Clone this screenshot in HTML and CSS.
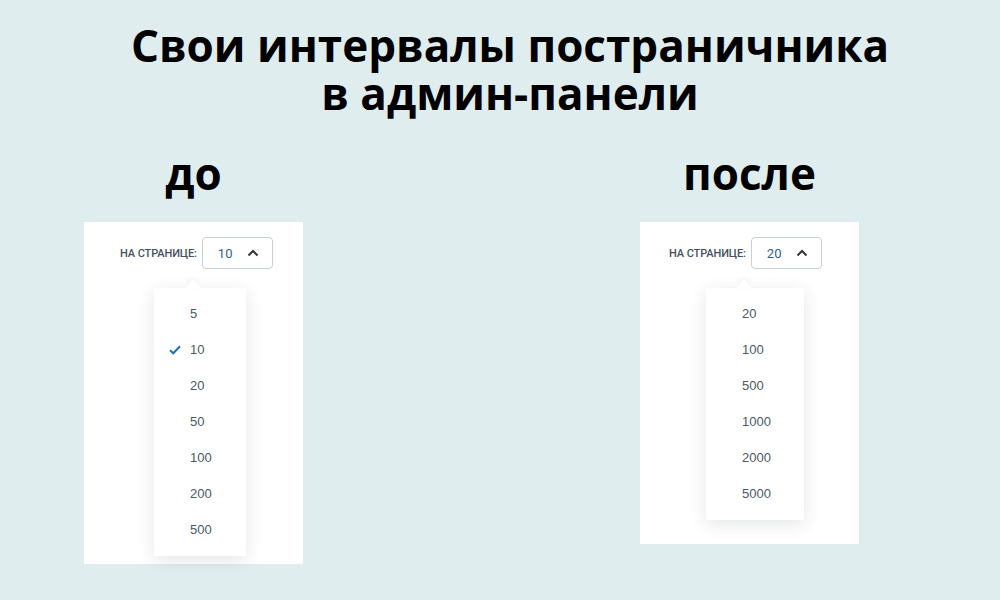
FILE: index.html
```html
<!DOCTYPE html>
<html lang="ru">
<head>
  <meta charset="UTF-8" />
  <title>Свои интервалы постраничника</title>
  <link rel="stylesheet" href="styles.css">
</head>
<body>
  <h1 class="title">
    <span class="title-line">Свои интервалы постраничника</span>
    <span class="title-line">в админ-панели</span>
  </h1>

  <div class="compare">
    <div class="column">
      <div class="column-title">до</div>
      <div class="card card-before">
        <div class="per-page">
          <span class="per-page-label">НА СТРАНИЦЕ:</span>
          <div class="select">
            <span class="select-value">10</span>
            <svg class="chevron" width="12" height="8" viewBox="0 0 12 8"><path d="M1.5 6.5 L6 2 L10.5 6.5" fill="none" stroke="#333" stroke-width="2"/></svg>
          </div>
        </div>
        <ul class="dropdown dropdown-before">
          <li>5</li>
          <li class="checked">
            <svg class="check" width="12" height="10" viewBox="0 0 12 10"><path d="M1 5.2 L4.3 8.3 L11 1.3" fill="none" stroke="#1f6fc0" stroke-width="2"/></svg>
            10
          </li>
          <li>20</li>
          <li>50</li>
          <li>100</li>
          <li>200</li>
          <li>500</li>
        </ul>
      </div>
    </div>

    <div class="column">
      <div class="column-title">после</div>
      <div class="card card-after">
        <div class="per-page">
          <span class="per-page-label">НА СТРАНИЦЕ:</span>
          <div class="select">
            <span class="select-value">20</span>
            <svg class="chevron" width="12" height="8" viewBox="0 0 12 8"><path d="M1.5 6.5 L6 2 L10.5 6.5" fill="none" stroke="#333" stroke-width="2"/></svg>
          </div>
        </div>
        <ul class="dropdown dropdown-after">
          <li>20</li>
          <li>100</li>
          <li>500</li>
          <li>1000</li>
          <li>2000</li>
          <li>5000</li>
        </ul>
      </div>
    </div>
  </div>
</body>
</html>
```

FILE: styles.css
```css
html, body {
  margin: 0;
  padding: 0;
  width: 1000px;
  height: 600px;
  overflow: hidden;
  background-color: #dfedee;
}

.title {
  margin: 0;
  padding-top: 21px;
  padding-left: 20px;
  text-align: center;
  font-family: 'Open Sans', sans-serif;
  font-weight: 700;
  font-size: 44px;
  line-height: 48px;
  color: #000;
}

.title-line {
  display: block;
  height: 48px;
}

.compare {
  display: flex;
  gap: 337px;
  padding-left: 84px;
  margin-top: 28px;
}

.column {
  width: 219px;
  display: flex;
  flex-direction: column;
}

.column-title {
  text-align: center;
  font-family: 'Open Sans', sans-serif;
  font-weight: 700;
  font-size: 44px;
  line-height: 56px;
  height: 77px;
  color: #000;
}

.card {
  background: #fff;
  padding-top: 15px;
  box-sizing: border-box;
}

.card-before {
  height: 342px;
  padding-left: 36px;
}

.card-after {
  height: 322px;
  padding-left: 29px;
}

.per-page {
  display: flex;
  align-items: center;
  gap: 5px;
}

.per-page-label {
  font-family: Roboto, sans-serif;
  font-size: 11px;
  font-weight: 500;
  color: #44525f;
  letter-spacing: -0.1px;
}

.select {
  width: 71px;
  height: 32px;
  box-sizing: border-box;
  border: 1px solid #c9cfd6;
  border-radius: 4px;
  display: flex;
  align-items: center;
  justify-content: space-between;
  padding: 0 13px 0 15px;
}

.select-value {
  font-family: Roboto, sans-serif;
  font-size: 13px;
  color: #2f5f8f;
}

.chevron {
  display: block;
}

.dropdown {
  position: relative;
  list-style: none;
  margin: 19px 0 0;
  padding: 8px 0;
  background: #fff;
  box-shadow: 0 4px 16px rgba(40, 50, 60, 0.12);
  font-family: 'Liberation Sans', Arial, sans-serif;
  font-size: 13px;
  color: #4a5868;
}

.dropdown::before {
  content: '';
  position: absolute;
  top: -9px;
  width: 0;
  height: 0;
  border-left: 8px solid transparent;
  border-right: 8px solid transparent;
  border-bottom: 9px solid #fff;
  filter: drop-shadow(0 -2px 2px rgba(40, 50, 60, 0.05));
}

.dropdown-before {
  margin-left: 34px;
  width: 92px;
}

.dropdown-before::before {
  left: 31px;
}

.dropdown-after {
  margin-left: 37px;
  width: 98px;
}

.dropdown-after::before {
  left: 30px;
}

.dropdown li {
  position: relative;
  height: 36px;
  line-height: 36px;
  padding-left: 36px;
}

.check {
  position: absolute;
  left: 15px;
  top: 13px;
}
```
